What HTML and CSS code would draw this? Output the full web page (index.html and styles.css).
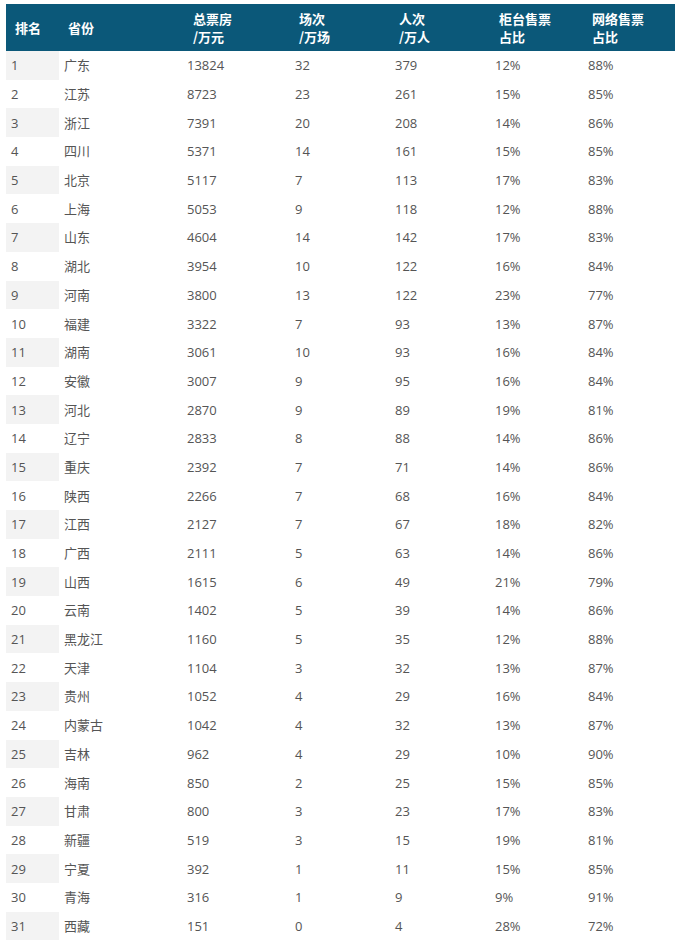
FILE: index.html
```html
<!DOCTYPE html>
<html lang="zh">
<head>
<meta charset="utf-8">
<link rel="stylesheet" href="styles.css">
</head>
<body>
<div class="wrap">
<table class="tbl">
<colgroup>
<col class="c1"><col class="c2"><col class="c3"><col class="c4"><col class="c5"><col class="c6"><col class="c7">
</colgroup>
<thead>
<tr>
<th>排名</th><th>省份</th><th>总票房<br>/万元</th><th>场次<br>/万场</th><th>人次<br>/万人</th><th>柜台售票<br>占比</th><th>网络售票<br>占比</th>
</tr>
</thead>
<tbody>
<tr><td>1</td><td>广东</td><td>13824</td><td>32</td><td>379</td><td>12%</td><td>88%</td></tr>
<tr><td>2</td><td>江苏</td><td>8723</td><td>23</td><td>261</td><td>15%</td><td>85%</td></tr>
<tr><td>3</td><td>浙江</td><td>7391</td><td>20</td><td>208</td><td>14%</td><td>86%</td></tr>
<tr><td>4</td><td>四川</td><td>5371</td><td>14</td><td>161</td><td>15%</td><td>85%</td></tr>
<tr><td>5</td><td>北京</td><td>5117</td><td>7</td><td>113</td><td>17%</td><td>83%</td></tr>
<tr><td>6</td><td>上海</td><td>5053</td><td>9</td><td>118</td><td>12%</td><td>88%</td></tr>
<tr><td>7</td><td>山东</td><td>4604</td><td>14</td><td>142</td><td>17%</td><td>83%</td></tr>
<tr><td>8</td><td>湖北</td><td>3954</td><td>10</td><td>122</td><td>16%</td><td>84%</td></tr>
<tr><td>9</td><td>河南</td><td>3800</td><td>13</td><td>122</td><td>23%</td><td>77%</td></tr>
<tr><td>10</td><td>福建</td><td>3322</td><td>7</td><td>93</td><td>13%</td><td>87%</td></tr>
<tr><td>11</td><td>湖南</td><td>3061</td><td>10</td><td>93</td><td>16%</td><td>84%</td></tr>
<tr><td>12</td><td>安徽</td><td>3007</td><td>9</td><td>95</td><td>16%</td><td>84%</td></tr>
<tr><td>13</td><td>河北</td><td>2870</td><td>9</td><td>89</td><td>19%</td><td>81%</td></tr>
<tr><td>14</td><td>辽宁</td><td>2833</td><td>8</td><td>88</td><td>14%</td><td>86%</td></tr>
<tr><td>15</td><td>重庆</td><td>2392</td><td>7</td><td>71</td><td>14%</td><td>86%</td></tr>
<tr><td>16</td><td>陕西</td><td>2266</td><td>7</td><td>68</td><td>16%</td><td>84%</td></tr>
<tr><td>17</td><td>江西</td><td>2127</td><td>7</td><td>67</td><td>18%</td><td>82%</td></tr>
<tr><td>18</td><td>广西</td><td>2111</td><td>5</td><td>63</td><td>14%</td><td>86%</td></tr>
<tr><td>19</td><td>山西</td><td>1615</td><td>6</td><td>49</td><td>21%</td><td>79%</td></tr>
<tr><td>20</td><td>云南</td><td>1402</td><td>5</td><td>39</td><td>14%</td><td>86%</td></tr>
<tr><td>21</td><td>黑龙江</td><td>1160</td><td>5</td><td>35</td><td>12%</td><td>88%</td></tr>
<tr><td>22</td><td>天津</td><td>1104</td><td>3</td><td>32</td><td>13%</td><td>87%</td></tr>
<tr><td>23</td><td>贵州</td><td>1052</td><td>4</td><td>29</td><td>16%</td><td>84%</td></tr>
<tr><td>24</td><td>内蒙古</td><td>1042</td><td>4</td><td>32</td><td>13%</td><td>87%</td></tr>
<tr><td>25</td><td>吉林</td><td>962</td><td>4</td><td>29</td><td>10%</td><td>90%</td></tr>
<tr><td>26</td><td>海南</td><td>850</td><td>2</td><td>25</td><td>15%</td><td>85%</td></tr>
<tr><td>27</td><td>甘肃</td><td>800</td><td>3</td><td>23</td><td>17%</td><td>83%</td></tr>
<tr><td>28</td><td>新疆</td><td>519</td><td>3</td><td>15</td><td>19%</td><td>81%</td></tr>
<tr><td>29</td><td>宁夏</td><td>392</td><td>1</td><td>11</td><td>15%</td><td>85%</td></tr>
<tr><td>30</td><td>青海</td><td>316</td><td>1</td><td>9</td><td>9%</td><td>91%</td></tr>
<tr><td>31</td><td>西藏</td><td>151</td><td>0</td><td>4</td><td>28%</td><td>72%</td></tr>
</tbody>
</table>
</div>
</body>
</html>
```

FILE: styles.css
```css
html, body {
  margin: 0;
  padding: 0;
  background: #ffffff;
}

.wrap {
  padding: 4px 5px 0 6px;
}

.tbl {
  width: 669px;
  table-layout: fixed;
  border-collapse: collapse;
  border-spacing: 0;
  font-family: "Open Sans", "Noto Sans CJK SC", sans-serif;
  font-size: 13px;
  color: #555555;
}

.c1 { width: 53px; }
.c2 { width: 123px; }
.c3 { width: 108px; }
.c4 { width: 100px; }
.c5 { width: 100px; }
.c6 { width: 93px; }
.c7 { width: 92px; }

.tbl th {
  background: #0b5879;
  color: #ffffff;
  font-family: "Noto Sans CJK SC", sans-serif;
  font-weight: bold;
  font-size: 13px;
  line-height: 18px;
  text-align: left;
  vertical-align: middle;
  height: 47px;
  padding: 0 0 0 9px;
  box-sizing: border-box;
}

.tbl th:nth-child(2) { padding-left: 9px; }
.tbl th:nth-child(3) { padding-left: 11px; }

.tbl td {
  height: 28.7px;
  padding: 0 0 0 5px;
  line-height: 16px;
  vertical-align: middle;
  box-sizing: border-box;
  white-space: nowrap;
}

.tbl tbody tr:nth-child(odd) td:first-child {
  background: #f3f3f3;
}
```
